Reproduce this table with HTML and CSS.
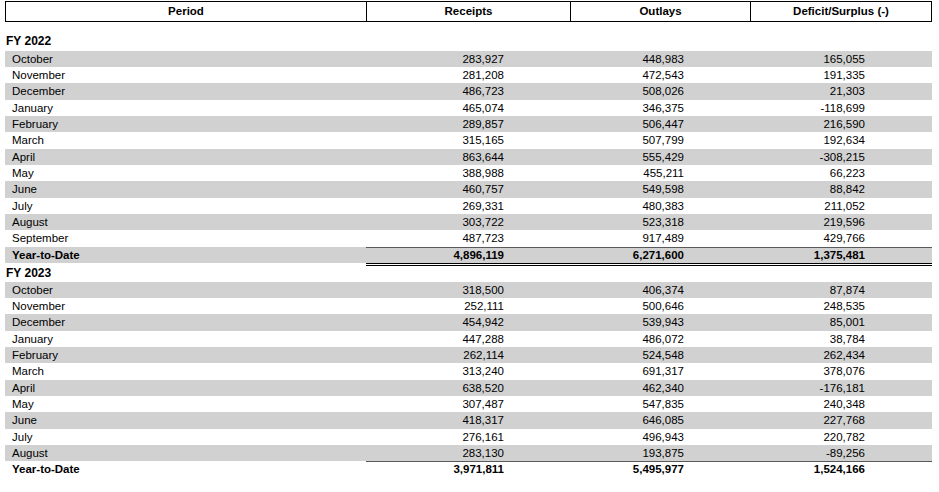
FILE: index.html
```html
<!DOCTYPE html>
<html>
<head>
<meta charset="utf-8">
<link rel="stylesheet" href="styles.css">
</head>
<body>
<div class="page">
  <div class="head">
    <div class="hcell">Period</div>
    <div class="hcell">Receipts</div>
    <div class="hcell">Outlays</div>
    <div class="hcell">Deficit/Surplus (-)</div>
  </div>

  <div class="fy fy-first">FY 2022</div>
  <div class="row shade"><div class="lbl">October</div><div class="num">283,927</div><div class="num">448,983</div><div class="num">165,055</div></div>
  <div class="row"><div class="lbl">November</div><div class="num">281,208</div><div class="num">472,543</div><div class="num">191,335</div></div>
  <div class="row shade"><div class="lbl">December</div><div class="num">486,723</div><div class="num">508,026</div><div class="num">21,303</div></div>
  <div class="row"><div class="lbl">January</div><div class="num">465,074</div><div class="num">346,375</div><div class="num">-118,699</div></div>
  <div class="row shade"><div class="lbl">February</div><div class="num">289,857</div><div class="num">506,447</div><div class="num">216,590</div></div>
  <div class="row"><div class="lbl">March</div><div class="num">315,165</div><div class="num">507,799</div><div class="num">192,634</div></div>
  <div class="row shade"><div class="lbl">April</div><div class="num">863,644</div><div class="num">555,429</div><div class="num">-308,215</div></div>
  <div class="row"><div class="lbl">May</div><div class="num">388,988</div><div class="num">455,211</div><div class="num">66,223</div></div>
  <div class="row shade"><div class="lbl">June</div><div class="num">460,757</div><div class="num">549,598</div><div class="num">88,842</div></div>
  <div class="row"><div class="lbl">July</div><div class="num">269,331</div><div class="num">480,383</div><div class="num">211,052</div></div>
  <div class="row shade"><div class="lbl">August</div><div class="num">303,722</div><div class="num">523,318</div><div class="num">219,596</div></div>
  <div class="row"><div class="lbl">September</div><div class="num">487,723</div><div class="num">917,489</div><div class="num">429,766</div></div>
  <div class="row shade total total-a"><div class="lbl">Year-to-Date</div><div class="num">4,896,119</div><div class="num">6,271,600</div><div class="num">1,375,481</div></div>

  <div class="fy fy-second">FY 2023</div>
  <div class="row shade"><div class="lbl">October</div><div class="num">318,500</div><div class="num">406,374</div><div class="num">87,874</div></div>
  <div class="row"><div class="lbl">November</div><div class="num">252,111</div><div class="num">500,646</div><div class="num">248,535</div></div>
  <div class="row shade"><div class="lbl">December</div><div class="num">454,942</div><div class="num">539,943</div><div class="num">85,001</div></div>
  <div class="row"><div class="lbl">January</div><div class="num">447,288</div><div class="num">486,072</div><div class="num">38,784</div></div>
  <div class="row shade"><div class="lbl">February</div><div class="num">262,114</div><div class="num">524,548</div><div class="num">262,434</div></div>
  <div class="row"><div class="lbl">March</div><div class="num">313,240</div><div class="num">691,317</div><div class="num">378,076</div></div>
  <div class="row shade"><div class="lbl">April</div><div class="num">638,520</div><div class="num">462,340</div><div class="num">-176,181</div></div>
  <div class="row"><div class="lbl">May</div><div class="num">307,487</div><div class="num">547,835</div><div class="num">240,348</div></div>
  <div class="row shade"><div class="lbl">June</div><div class="num">418,317</div><div class="num">646,085</div><div class="num">227,768</div></div>
  <div class="row"><div class="lbl">July</div><div class="num">276,161</div><div class="num">496,943</div><div class="num">220,782</div></div>
  <div class="row shade"><div class="lbl">August</div><div class="num">283,130</div><div class="num">193,875</div><div class="num">-89,256</div></div>
  <div class="row total total-b"><div class="lbl">Year-to-Date</div><div class="num">3,971,811</div><div class="num">5,495,977</div><div class="num">1,524,166</div></div>
</div>
</body>
</html>
```

FILE: styles.css
```css
html, body {
  margin: 0;
  padding: 0;
  background: #fff;
}

body {
  font-family: "Liberation Sans", Arial, sans-serif;
  font-size: 11.5px;
  color: #000;
}

.page {
  padding: 1px 0 0 5px;
  width: 927px;
}

.head {
  display: grid;
  grid-template-columns: 360px 204px 180px 181px;
  border: 1px solid #000;
  height: 21px;
  box-sizing: border-box;
}

.hcell {
  font-weight: bold;
  text-align: center;
  line-height: 19px;
  border-left: 1px solid #000;
}

.hcell:first-child {
  border-left: none;
}

.fy {
  font-weight: bold;
  height: 16.35px;
  line-height: 16.35px;
  padding-left: 1px;
  font-size: 12px;
}

.fy-first {
  margin: 11px 0 1.35px;
}

.fy-second {
  margin: 2px 0 0;
}

.row {
  display: grid;
  grid-template-columns: 361px 204px 180px 182px;
  height: 16.35px;
  line-height: 16.35px;
}

.shade {
  background: #d1d1d1;
}

.lbl {
  padding-left: 7px;
  white-space: nowrap;
}

.num {
  text-align: right;
  padding-right: 66px;
}

.num:last-child {
  padding-right: 67px;
}

.total {
  font-weight: bold;
}

.total .num {
  box-sizing: border-box;
  border-top: 1px solid #5a5a5a;
  line-height: 15px;
}

.total-a .num {
  box-shadow: 0 1px 0 #000, 0 2px 0 #fff, 0 3px 0 #000;
}

.total-b {
  height: 17px;
}

.total-b > div {
  box-sizing: border-box;
  border-bottom: 1px solid #5a5a5a;
}

.total-b .num {
  line-height: 15px;
  box-shadow: 0 3px 0 #fff, 0 4px 0 #000;
}
```
